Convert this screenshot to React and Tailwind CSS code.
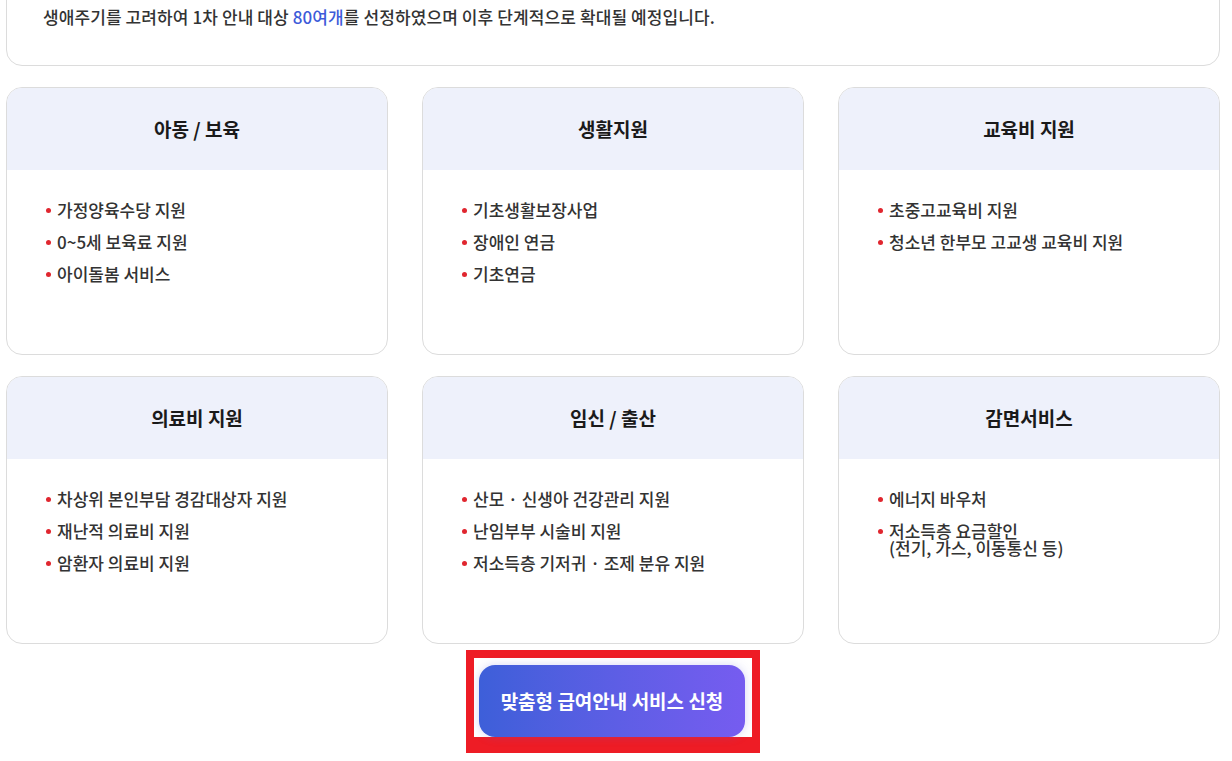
import React from "react";

const cards = [
  { title: "아동 / 보육", items: ["가정양육수당 지원", "0~5세 보육료 지원", "아이돌봄 서비스"] },
  { title: "생활지원", items: ["기초생활보장사업", "장애인 연금", "기초연금"] },
  { title: "교육비 지원", items: ["초중고교육비 지원", "청소년 한부모 고교생 교육비 지원"] },
  { title: "의료비 지원", items: ["차상위 본인부담 경감대상자 지원", "재난적 의료비 지원", "암환자 의료비 지원"] },
  { title: "임신 / 출산", items: ["산모 · 신생아 건강관리 지원", "난임부부 시술비 지원", "저소득층 기저귀 · 조제 분유 지원"] },
  { title: "감면서비스", items: ["에너지 바우처", ["저소득층 요금할인", "(전기, 가스, 이동통신 등)"]] },
];

function Card({ title, items }) {
  return (
    <div className="h-[268px] rounded-[16px] border border-[#dcdcdc] bg-white overflow-hidden flex flex-col">
      <div className="h-[82px] bg-[#eef1fb] flex items-center justify-center text-[19px] font-bold text-[#1a1a1a]">
        {title}
      </div>
      <ul className="pt-[31px] pl-[39px] flex flex-col gap-[14px]">
        {items.map((it, i) => (
          <li key={i} className="flex items-start text-[17px] leading-[18px] font-medium text-[#333]">
            <span className="mt-[7px] mr-[6px] w-[5px] h-[5px] rounded-full bg-[#e0262f] shrink-0" />
            {Array.isArray(it) ? (
              <span className="flex flex-col">
                <span>{it[0]}</span>
                <span className="-mt-[1px]">{it[1]}</span>
              </span>
            ) : (
              <span>{it}</span>
            )}
          </li>
        ))}
      </ul>
    </div>
  );
}

export default function App() {
  return (
    <div
      className="w-[1232px] h-[761px] overflow-hidden bg-white"
      style={{ fontFamily: '"Noto Sans CJK KR", "Noto Sans", sans-serif' }}
    >
      <div className="ml-[6px] w-[1214px]">
        <div className="-mt-[40px] h-[106px] rounded-[16px] border border-[#dcdcdc] bg-white pt-[44px] pl-[36px]">
          <p className="text-[17px] leading-[24px] font-medium text-[#333] tracking-[0.1px]">
            생애주기를 고려하여 1차 안내 대상 <span className="text-[#3d5bd9]">80여개</span>를 선정하였으며 이후 단계적으로 확대될 예정입니다.
          </p>
        </div>
        <div className="mt-[21px] grid grid-cols-3 gap-x-[34px] gap-y-[21px]">
          {cards.map((c) => (
            <Card key={c.title} {...c} />
          ))}
        </div>
        <div className="mt-[6px] flex">
          <div className="ml-[460px] border-[8px] border-b-[16px] border-[#ee1c25] bg-white pt-[7px] pl-[5px] pr-[7px]">
            <button className="w-[266px] h-[72px] rounded-[16px] bg-gradient-to-r from-[#3d5fd9] to-[#765cf0] text-white text-[19px] font-bold shadow-[0_0_10px_rgba(100,100,220,0.25)]">
              맞춤형 급여안내 서비스 신청
            </button>
          </div>
        </div>
      </div>
    </div>
  );
}
